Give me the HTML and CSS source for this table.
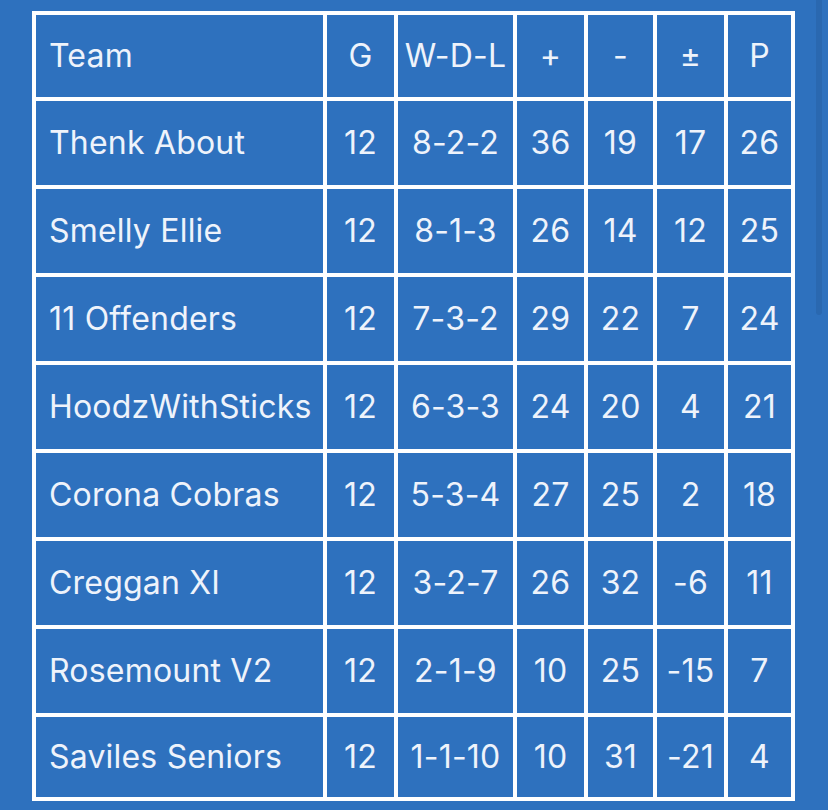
FILE: index.html
```html
<!DOCTYPE html>
<html>
<head>
<meta charset="utf-8">
<link rel="stylesheet" href="styles.css">
</head>
<body>
<div class="page">
<table class="standings">
  <colgroup>
    <col class="c-team"><col class="c-g"><col class="c-wdl"><col class="c-plus"><col class="c-minus"><col class="c-diff"><col class="c-p">
  </colgroup>
  <thead>
    <tr><th class="team">Team</th><th>G</th><th>W-D-L</th><th>+</th><th>-</th><th>±</th><th>P</th></tr>
  </thead>
  <tbody>
    <tr><td class="team">Thenk About</td><td>12</td><td>8-2-2</td><td>36</td><td>19</td><td>17</td><td>26</td></tr>
    <tr><td class="team">Smelly Ellie</td><td>12</td><td>8-1-3</td><td>26</td><td>14</td><td>12</td><td>25</td></tr>
    <tr><td class="team">11 Offenders</td><td>12</td><td>7-3-2</td><td>29</td><td>22</td><td>7</td><td>24</td></tr>
    <tr><td class="team">HoodzWithSticks</td><td>12</td><td>6-3-3</td><td>24</td><td>20</td><td>4</td><td>21</td></tr>
    <tr><td class="team">Corona Cobras</td><td>12</td><td>5-3-4</td><td>27</td><td>25</td><td>2</td><td>18</td></tr>
    <tr><td class="team">Creggan XI</td><td>12</td><td>3-2-7</td><td>26</td><td>32</td><td>-6</td><td>11</td></tr>
    <tr><td class="team">Rosemount V2</td><td>12</td><td>2-1-9</td><td>10</td><td>25</td><td>-15</td><td>7</td></tr>
    <tr class="last"><td class="team">Saviles Seniors</td><td>12</td><td>1-1-10</td><td>10</td><td>31</td><td>-21</td><td>4</td></tr>
  </tbody>
</table>
<div class="scroll-thumb"></div>
</div>
</body>
</html>
```

FILE: styles.css
```css
html, body {
  margin: 0;
  padding: 0;
  background: #2e71be;
}
.page {
  position: relative;
  width: 828px;
  height: 810px;
  overflow: hidden;
  padding: 11px 0 0 32px;
  box-sizing: border-box;
}
.standings {
  border-collapse: separate;
  border-spacing: 4px;
  background: #ffffff;
  table-layout: fixed;
  width: 763px;
  font-family: Inter, "Open Sans", sans-serif;
  font-size: 32px;
  font-weight: 400;
  color: #eef3fb;
}
.c-team { width: 287px; }
.c-g { width: 67px; }
.c-wdl { width: 115px; }
.c-plus { width: 67px; }
.c-minus { width: 65px; }
.c-diff { width: 67px; }
.c-p { width: 63px; }
.standings th,
.standings td {
  background: #2e71be;
  padding: 0;
  text-align: center;
  vertical-align: middle;
  font-weight: 400;
  height: 84px;
  white-space: nowrap;
  letter-spacing: 0.2px;
  line-height: 1;
}
.standings thead th { height: 82px; }
.standings tr.last td { height: 80px; }
.standings .team {
  text-align: left;
  padding-left: 13px;
}
.scroll-thumb {
  position: absolute;
  top: 0;
  left: 816px;
  width: 6px;
  height: 315px;
  background: #2a68b0;
  border-radius: 0 0 3px 3px;
}
```
